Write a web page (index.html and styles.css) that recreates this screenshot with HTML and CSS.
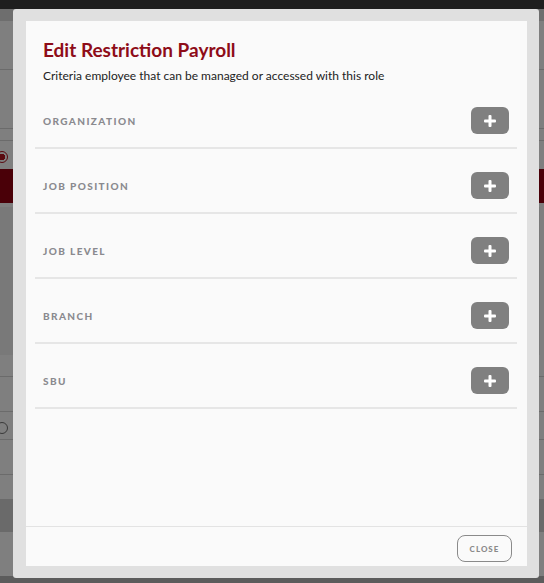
FILE: index.html
```html
<!DOCTYPE html>
<html lang="en">

<head>
    <meta charset="UTF-8">
    <meta name="viewport" content="width=device-width, initial-scale=1.0">
    <title>Edit Restriction Payroll</title>
    <link rel="stylesheet" href="styles.css">
</head>

<body>

    <!-- pagina de fondo (atenuada por el overlay) -->
    <div class="page">
        <div class="topbar"></div>
        <div class="band"></div>
        <div class="bg-row h48 line"></div>
        <div class="bg-row h58 line"></div>
        <div class="bg-row h11 line"></div>
        <div class="bg-row h28"><span class="radio checked"></span></div>
        <div class="bg-red"></div>
        <div class="bg-row h4"></div>
        <div class="bg-panel"></div>
        <div class="bg-row h21 line"></div>
        <div class="bg-row h34 line"></div>
        <div class="bg-row h27 line"><span class="radio"></span></div>
        <div class="bg-row h34 line"></div>
        <div class="bg-row h24"></div>
        <div class="bg-dark line"></div>
        <div class="bg-row h44"></div>
        <div class="bg-bottom"></div>
    </div>

    <div class="modal">
        <div class="modal-content">
            <div class="modal-header">
                <h1 class="modal-title">Edit Restriction Payroll</h1>
                <p class="modal-subtitle">Criteria employee that can be managed or accessed with this role</p>
            </div>

            <div class="criteria">
                <div class="criteria-row">
                    <span class="criteria-label">ORGANIZATION</span>
                    <button class="btn-add" type="button"><svg width="12" height="12" viewBox="0 0 12 12"><rect x="4.5" y="0" width="3" height="12" rx="1" fill="#fff"/><rect x="0" y="4.5" width="12" height="3" rx="1" fill="#fff"/></svg></button>
                </div>
                <div class="criteria-row">
                    <span class="criteria-label">JOB POSITION</span>
                    <button class="btn-add" type="button"><svg width="12" height="12" viewBox="0 0 12 12"><rect x="4.5" y="0" width="3" height="12" rx="1" fill="#fff"/><rect x="0" y="4.5" width="12" height="3" rx="1" fill="#fff"/></svg></button>
                </div>
                <div class="criteria-row">
                    <span class="criteria-label">JOB LEVEL</span>
                    <button class="btn-add" type="button"><svg width="12" height="12" viewBox="0 0 12 12"><rect x="4.5" y="0" width="3" height="12" rx="1" fill="#fff"/><rect x="0" y="4.5" width="12" height="3" rx="1" fill="#fff"/></svg></button>
                </div>
                <div class="criteria-row">
                    <span class="criteria-label">BRANCH</span>
                    <button class="btn-add" type="button"><svg width="12" height="12" viewBox="0 0 12 12"><rect x="4.5" y="0" width="3" height="12" rx="1" fill="#fff"/><rect x="0" y="4.5" width="12" height="3" rx="1" fill="#fff"/></svg></button>
                </div>
                <div class="criteria-row">
                    <span class="criteria-label">SBU</span>
                    <button class="btn-add" type="button"><svg width="12" height="12" viewBox="0 0 12 12"><rect x="4.5" y="0" width="3" height="12" rx="1" fill="#fff"/><rect x="0" y="4.5" width="12" height="3" rx="1" fill="#fff"/></svg></button>
                </div>
            </div>

            <div class="modal-footer">
                <button class="btn-close" type="button">CLOSE</button>
            </div>
        </div>
    </div>

</body>

</html>
```

FILE: styles.css
```css
body {
    margin: 0;
    padding: 0;
    background-color: #7f7f7f;
    font-family: "Lato", "Open Sans", sans-serif;
    overflow: hidden;
}

/* fondo */
.page {
    display: flex;
    flex-direction: column;
    height: 583px;
}

.topbar {
    height: 9px;
    background-color: #1e1e1e;
}

.band {
    height: 12px;
    background-color: #6e6e6e;
}

.bg-row {
    display: flex;
    align-items: center;
    background-color: #7f7f7f;
}

.bg-row.line {
    border-bottom: 1px solid #6b6b6b;
}

.h4 { height: 4px; }
.h11 { height: 11px; }
.h21 { height: 21px; }
.h24 { height: 24px; }
.h27 { height: 27px; }
.h28 { height: 28px; }
.h34 { height: 34px; }
.h44 { height: 44px; }
.h48 { height: 48px; }
.h58 { height: 58px; }

.radio {
    width: 10px;
    height: 10px;
    margin-left: -4px;
    margin-top: 4px;
    border: 1.5px solid #3a3a3a;
    border-radius: 50%;
    box-sizing: content-box;
}

.radio.checked {
    border-color: #5a0a10;
    background: radial-gradient(circle, #5a0a10 45%, transparent 50%);
}

.bg-red {
    height: 34px;
    background-color: #4a0008;
}

.bg-panel {
    height: 148px;
    background-color: #797979;
    margin-right: 4px;
}

.bg-dark {
    height: 33px;
    background-color: #6a6a6a;
}

.bg-bottom {
    flex: 1;
    background-color: #5c5c5c;
}

/* modal */
.modal {
    position: fixed;
    top: 9px;
    left: 13px;
    width: 526px;
    height: 569px;
    box-sizing: border-box;
    padding: 12px 12px 12px 13px;
    background-color: #e0e0e0;
    border-radius: 3px;
}

.modal-content {
    display: flex;
    flex-direction: column;
    height: 100%;
    background-color: #fafafa;
}

.modal-header {
    padding: 17px 17px 0 17px;
}

.modal-title {
    margin: 0;
    font-size: 19px;
    line-height: 24px;
    font-weight: 700;
    color: #8e0c18;
}

.modal-subtitle {
    margin: 6px 0 0 0;
    font-size: 12px;
    line-height: 16px;
    color: #222;
}

.criteria {
    flex: 1;
    padding: 0 10px 0 9px;
}

.criteria-row {
    display: flex;
    align-items: center;
    justify-content: space-between;
    padding: 23px 8px 13px 8px;
    border-bottom: 2px solid #e6e6e6;
}

.criteria-label {
    font-size: 10px;
    font-weight: 900;
    letter-spacing: 1.4px;
    color: #8a8a8f;
}

.btn-add {
    display: flex;
    align-items: center;
    justify-content: center;
    width: 38px;
    height: 27px;
    padding: 0;
    border: none;
    border-radius: 6px;
    background-color: #808080;
}

.modal-footer {
    display: flex;
    justify-content: flex-end;
    height: 40px;
    box-sizing: border-box;
    padding: 8px 15px 0 0;
    border-top: 1px solid #e3e3e3;
}

.btn-close {
    width: 55px;
    height: 27px;
    padding: 0;
    border: 1px solid #8a8a8a;
    border-radius: 8px;
    background: transparent;
    font-family: "Lato", sans-serif;
    font-size: 8px;
    font-weight: 900;
    letter-spacing: 1px;
    color: #8a8a8a;
}
```
